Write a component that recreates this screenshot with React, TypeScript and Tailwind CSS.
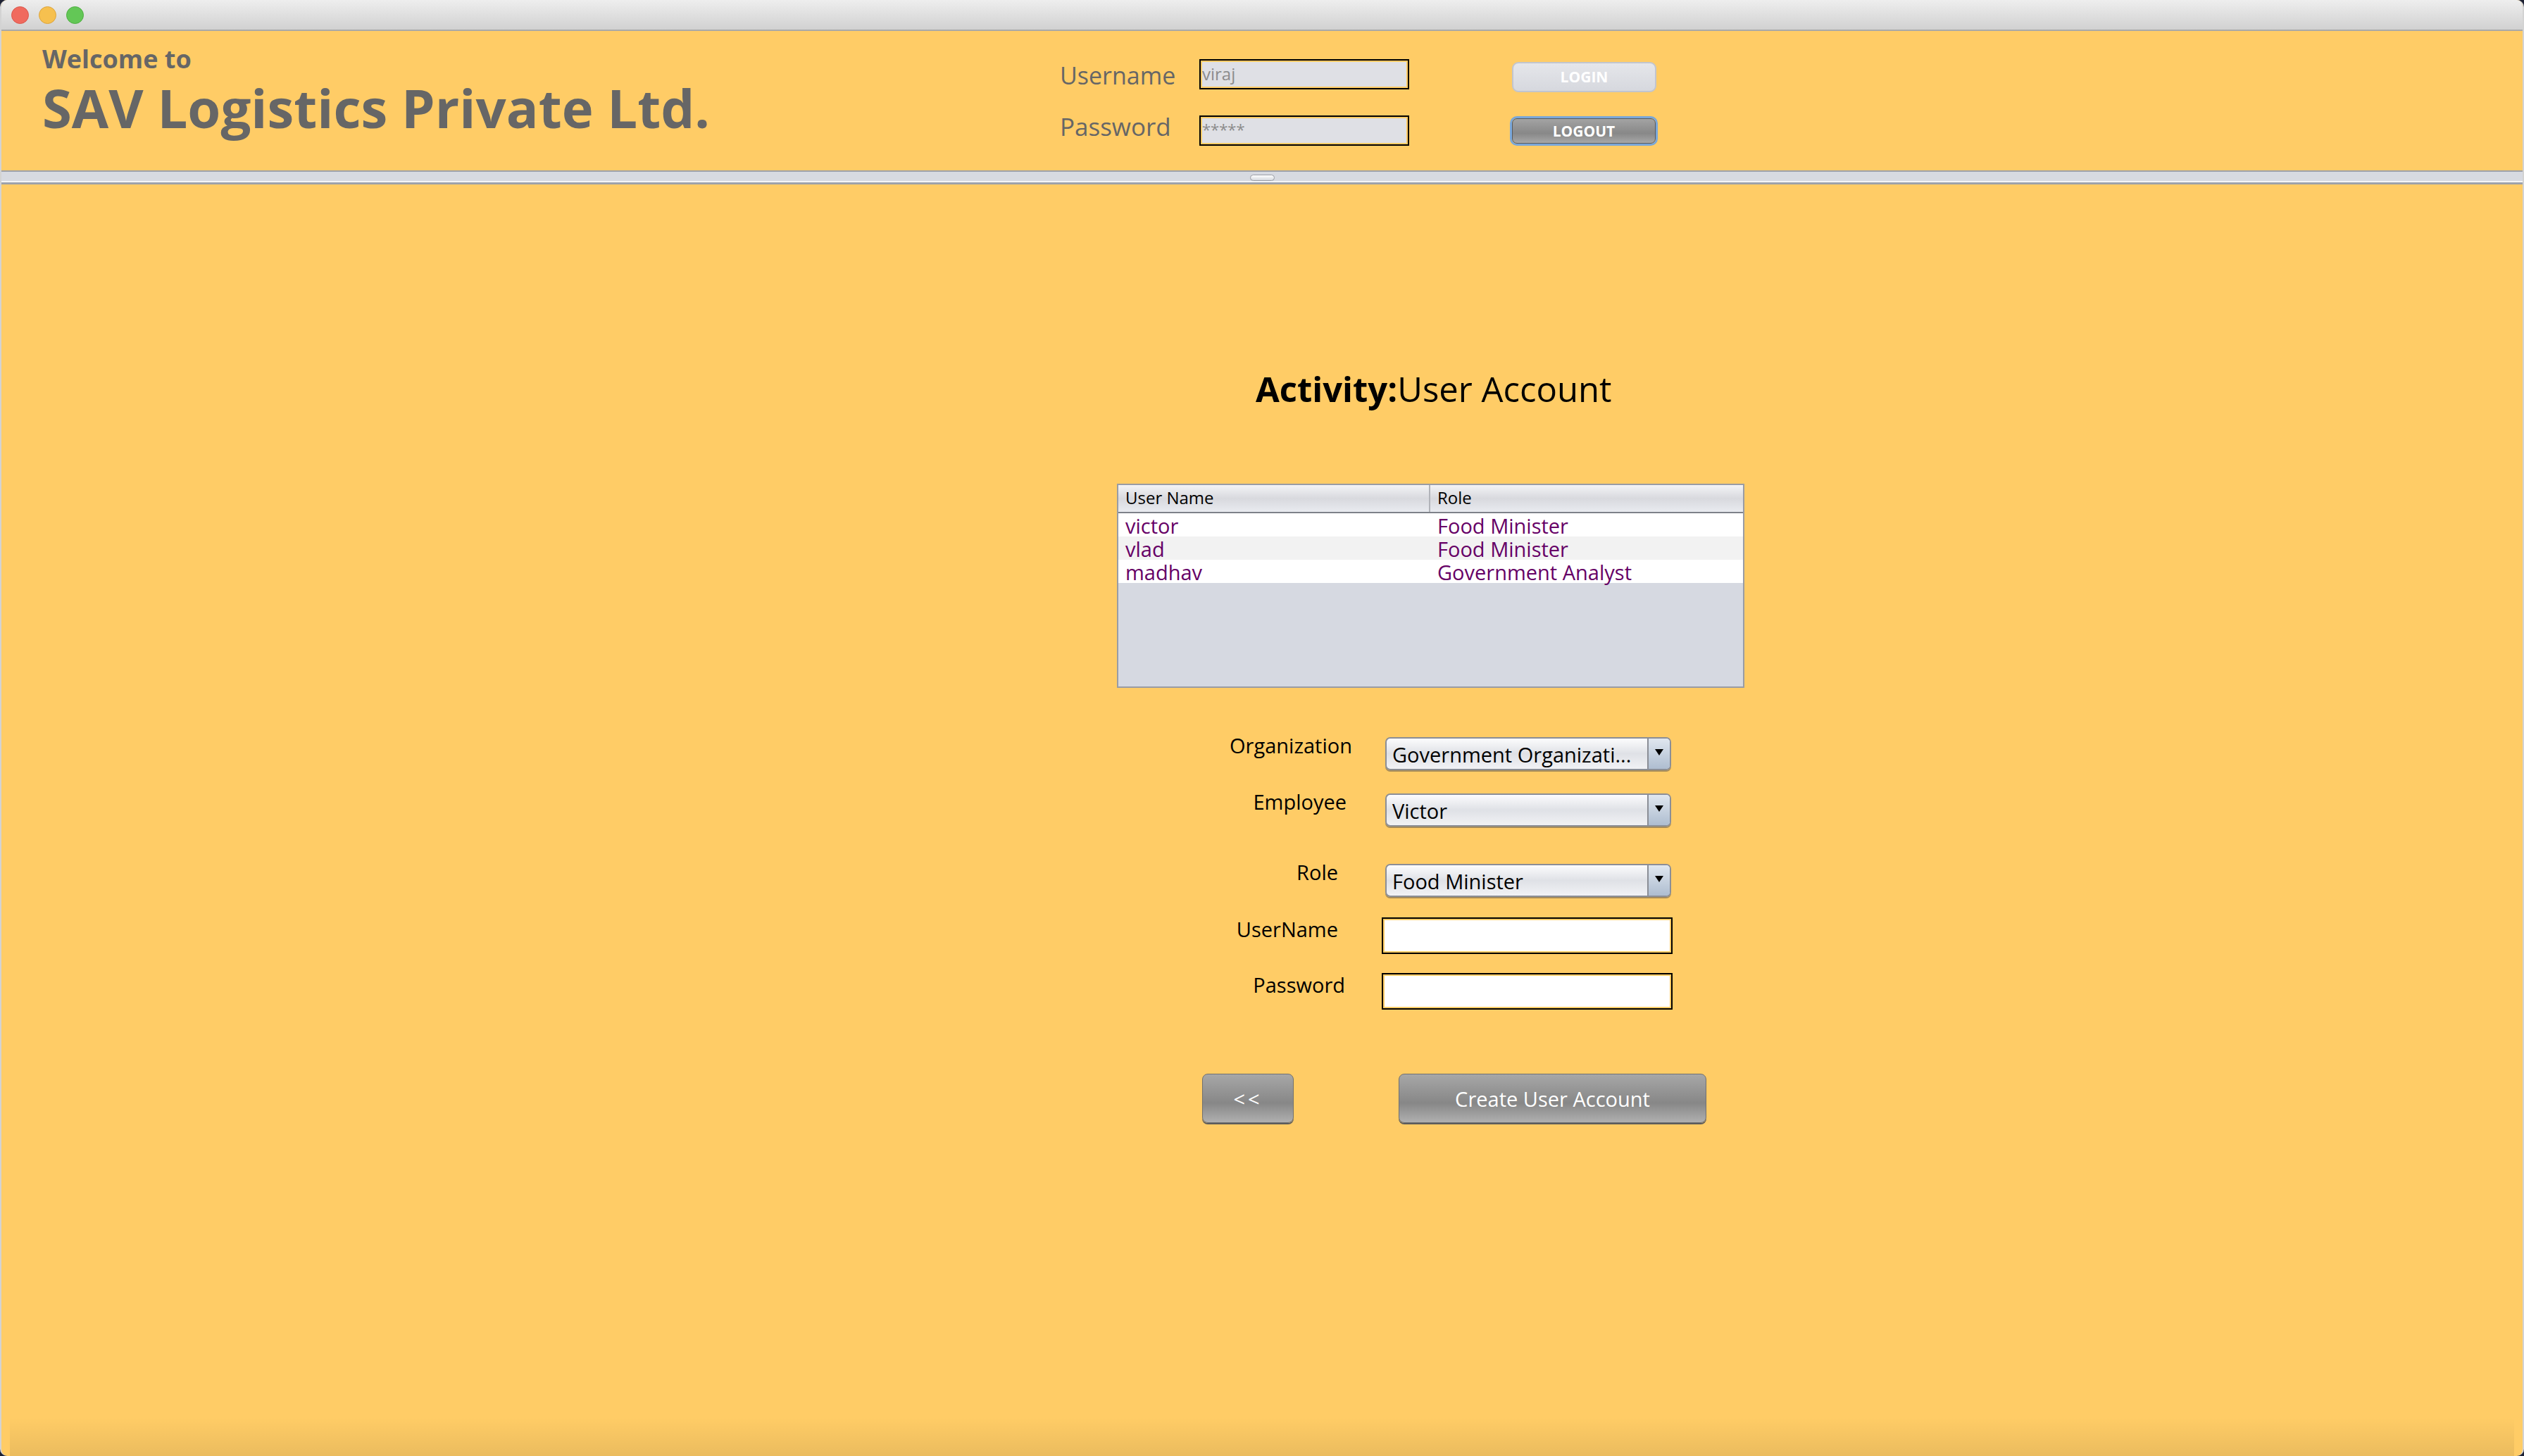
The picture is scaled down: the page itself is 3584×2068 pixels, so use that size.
import React from 'react';

const users = [
  { name: 'victor', role: 'Food Minister' },
  { name: 'vlad', role: 'Food Minister' },
  { name: 'madhav', role: 'Government Analyst' },
];

const Combo = ({ value }: { value: string }) => (
  <div className="flex h-[47px] w-[406px] overflow-hidden rounded-[7px] border-2 border-[#8b8e96] bg-linear-to-b from-[#fcfcfd] via-[#dfe1e6] to-[#f1f2f5] shadow-[0_2px_0_rgba(60,62,70,0.45)]">
    <div className="flex flex-1 items-center pl-[8px] pt-[2px] text-[29px] leading-none text-black">{value}</div>
    <div className="flex w-[32px] items-center justify-center border-l-2 border-[#8b8e96] bg-linear-to-b from-[#e0e7ef] to-[#aebdd0]">
      <div className="mb-[4px] h-0 w-0 border-x-[6px] border-t-[9px] border-x-transparent border-t-black" />
    </div>
  </div>
);

const Field = () => (
  <div className="h-[52px] w-[413px] border-2 border-black bg-[#ffcc66] p-[2px]">
    <div className="h-full w-full bg-white" />
  </div>
);

const GrayButton = ({ label, className }: { label: string; className: string }) => (
  <button
    className={`flex h-[70px] items-center justify-center rounded-[8px] border border-[#707070] bg-linear-to-b from-[#a7a7a7] via-[#878787] via-60% to-[#b0b0b0] text-[29px] leading-none text-white shadow-[0_2px_0_#5c5c5c] ${className}`}
  >
    {label}
  </button>
);

export default function App() {
  return (
    <div className="h-[2068px] w-[3584px] overflow-hidden bg-[#1d2133] font-['Open_Sans',sans-serif]">
      <div className="flex h-full flex-col overflow-hidden rounded-[10px] border-x-2 border-[#d3d3d3] bg-[#ffcc66]">
        {/* title bar */}
        <div className="flex h-[44px] shrink-0 items-center gap-[14px] border-b-2 border-[#a9a9a9] bg-linear-to-b from-[#eeeeee] to-[#d1d1d1] pl-[14px]">
          <span className="h-[25px] w-[25px] rounded-full border border-[#d9584c] bg-[#f06a5e]" />
          <span className="h-[25px] w-[25px] rounded-full border border-[#dca43c] bg-[#f6c04f]" />
          <span className="h-[25px] w-[25px] rounded-full border border-[#4fae42] bg-[#63c756]" />
        </div>

        {/* header */}
        <div className="flex h-[198px] shrink-0">
          <div className="w-[1503px] pl-[58px] font-bold leading-none text-[#666]">
            <div className="mt-[22px] text-[36px]">Welcome to</div>
            <div className="mt-[13px] text-[76px]">SAV Logistics Private Ltd.</div>
          </div>
          <div className="flex flex-col pt-[40px]">
            <div className="flex items-start">
              <div className="mt-[6px] w-[198px] text-[34px] leading-none text-[#666]">Username</div>
              <div className="h-[43px] w-[298px] border-2 border-black bg-[#ffcc66] p-[2px]">
                <div className="h-full bg-[#dfe0e5] pt-[5px] text-[24px] leading-none text-[#8c8c8c]">viraj</div>
              </div>
              <button className="ml-[146px] mt-[4px] flex h-[43px] w-[205px] items-center justify-center rounded-[9px] border-2 border-[#c2c5cd] bg-linear-to-b from-[#e5e6ea] to-[#d6d8de] text-[21px] font-bold leading-none text-white">
                LOGIN
              </button>
            </div>
            <div className="mt-[31px] flex items-start">
              <div className="w-[198px] text-[35px] leading-none text-[#666]">Password</div>
              <div className="mt-[2px] h-[43px] w-[298px] border-2 border-black bg-[#ffcc66] p-[2px]">
                <div className="h-full bg-[#dfe0e5] pt-[4px] text-[22px] leading-none text-[#8c8c8c]">*****</div>
              </div>
              <div className="ml-[143px] mt-[3px] h-[42px] w-[210px] rounded-[10px] border-[3px] border-[#7aa7d9]">
                <div className="flex h-full items-center justify-center rounded-[7px] border border-[#5a5a5a] bg-linear-to-b from-[#a3a3a3] via-[#888888] via-60% to-[#a8a8a8] text-[21px] font-bold leading-none text-white">
                  LOGOUT
                </div>
              </div>
            </div>
          </div>
        </div>

        {/* split divider */}
        <div className="flex h-[20px] shrink-0 flex-col border-t-2 border-b-[3px] border-[#9ea2aa] bg-[#d7dae1]">
          <div className="flex h-[13px] justify-center pt-[4px]">
            <div className="h-[9px] w-[35px] rounded-full border border-[#9a9da5] bg-linear-to-b from-white to-[#d5d8de]" />
          </div>
          <div className="h-[2px] bg-[#f4f5f7]" />
        </div>

        {/* work area */}
        <div className="flex flex-1 flex-col">
          <div className="ml-[1584px] flex w-[891px] flex-col">
            <div className="ml-[197px] mt-[266px] text-[49px] leading-none text-black">
              <span className="font-bold">Activity:</span>User Account
            </div>

            <div className="mt-[110px] flex h-[290px] w-[891px] flex-col border-2 border-[#999ca4] bg-[#d6d9e1]">
              <div className="flex h-[40px] border-b-2 border-[#7e8189] bg-linear-to-b from-[#f4f4f6] via-[#d8d9de] to-[#e9ebf0] text-[24px] leading-none text-black">
                <div className="w-[443px] border-r-2 border-[#b1b3b9] pl-[10px] pt-[6px]">User Name</div>
                <div className="flex-1 pl-[10px] pt-[6px]">Role</div>
              </div>
              {users.map((u, i) => (
                <div
                  key={u.name}
                  className={`flex h-[33px] text-[29px] leading-none text-[#660066] ${i % 2 === 1 ? 'bg-[#f2f2f2]' : 'bg-white'}`}
                >
                  <div className="w-[443px] pl-[10px] pt-[3px]">{u.name}</div>
                  <div className="flex-1 pl-[10px] pt-[3px]">{u.role}</div>
                </div>
              ))}
            </div>

            <div className="mt-[67px] flex items-start">
              <div className="w-[340px] pr-[6px] text-right text-[29px] leading-none">Organization</div>
              <div className="ml-[41px] mt-[3px]">
                <Combo value="Government Organizati..." />
              </div>
            </div>
            <div className="mt-[30px] flex items-start">
              <div className="w-[340px] pr-[14px] text-right text-[29px] leading-none">Employee</div>
              <div className="ml-[41px] mt-[3px]">
                <Combo value="Victor" />
              </div>
            </div>
            <div className="mt-[50px] flex items-start">
              <div className="w-[340px] pr-[26px] text-right text-[29px] leading-none">Role</div>
              <div className="ml-[41px] mt-[3px]">
                <Combo value="Food Minister" />
              </div>
            </div>
            <div className="mt-[29px] flex items-start">
              <div className="mt-[2px] w-[340px] pr-[26px] text-right text-[29px] leading-none">UserName</div>
              <div className="ml-[36px]">
                <Field />
              </div>
            </div>
            <div className="mt-[27px] flex items-start">
              <div className="mt-[2px] w-[340px] pr-[16px] text-right text-[29px] leading-none">Password</div>
              <div className="ml-[36px]">
                <Field />
              </div>
            </div>

            <div className="mt-[91px] flex">
              <GrayButton label="<<" className="ml-[121px] w-[130px] tracking-[4px]" />
              <GrayButton label="Create User Account" className="ml-[149px] w-[437px]" />
            </div>
          </div>

          <div className="flex-1" />
          <div className="mx-[12px] h-[55px] shrink-0 bg-linear-to-b from-transparent to-black/[0.08]" />
        </div>
      </div>
    </div>
  );
}
